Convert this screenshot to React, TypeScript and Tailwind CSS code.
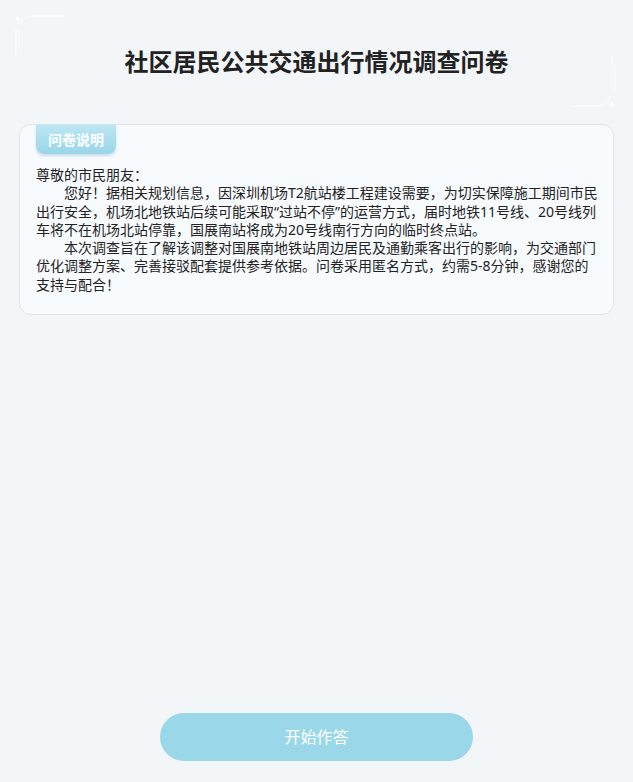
import React from "react";

const font = { fontFamily: '"Noto Sans", "Noto Sans CJK SC", sans-serif' };

function CornerDecor() {
  return (
    <>
      <svg className="absolute left-0 top-0 opacity-80" width="80" height="80" viewBox="0 0 80 80">
        <path d="M18 15.5 L19.3 17.7 L21.5 19 L19.3 20.3 L18 22.5 L16.7 20.3 L14.5 19 L16.7 17.7 Z" fill="#ffffff" />
        <path d="M29 16 H65" stroke="#ffffff" strokeWidth="1.2" fill="none" />
        <path d="M29 16 Q21 19 19 26" stroke="#ffffff" strokeWidth="1" fill="none" />
        <path d="M16 28 V62 M19 30 V50" stroke="#ffffff" strokeWidth="1" fill="none" />
      </svg>
      <svg className="absolute right-0 top-[50px] opacity-80" width="60" height="70" viewBox="0 0 60 70">
        <path d="M39 51.5 L40.3 53.7 L42.5 55 L40.3 56.3 L39 58.5 L37.7 56.3 L35.5 55 L37.7 53.7 Z" fill="#ffffff" />
        <path d="M39 5 V40 M42 15 V42" stroke="#ffffff" strokeWidth="1" fill="none" />
        <path d="M28 56 Q36 53 38 46" stroke="#ffffff" strokeWidth="1" fill="none" />
        <path d="M28 56 H0" stroke="#ffffff" strokeWidth="1.2" fill="none" />
      </svg>
    </>
  );
}

export default function App() {
  return (
    <div className="relative w-[633px] h-[782px] bg-[#f3f6f9] overflow-hidden flex flex-col" style={font}>
      <CornerDecor />

      {/* Title */}
      <h1 className="mt-[46px] text-center text-[24px] leading-[32px] font-bold text-[#222]">
        社区居民公共交通出行情况调查问卷
      </h1>

      {/* Intro card */}
      <div className="mx-[19px] mt-[46px] rounded-[12px] border border-[#dfe5ec] bg-[#f8fbfe] pl-4 pr-[11px] pb-[20px]">
        <div className="w-[80px] h-[29px] rounded-b-[8px] bg-gradient-to-b from-[#bde7f3] to-[#98d5e8] shadow-[0_2px_3px_rgba(120,170,190,0.35)] flex items-center justify-center text-white text-[14px] font-bold">
          问卷说明
        </div>
        <div className="mt-[12px] text-[14px] leading-[18.3px] text-[#222]">
          <p>尊敬的市民朋友：</p>
          <p className="indent-[2em]">
            您好！据相关规划信息，因深圳机场T2航站楼工程建设需要，为切实保障施工期间市民出行安全，机场北地铁站后续可能采取“过站不停”的运营方式，届时地铁11号线、20号线列车将不在机场北站停靠，国展南站将成为20号线南行方向的临时终点站。
          </p>
          <p className="indent-[2em]">
            本次调查旨在了解该调整对国展南地铁站周边居民及通勤乘客出行的影响，为交通部门优化调整方案、完善接驳配套提供参考依据。问卷采用匿名方式，约需5-8分钟，感谢您的支持与配合！
          </p>
        </div>
      </div>

      <div className="flex-1" />

      {/* Start button */}
      <div className="flex justify-center pb-[21px]">
        <button className="w-[313px] h-[48px] rounded-full bg-[#9ad8e9] text-white text-[16px]">
          开始作答
        </button>
      </div>
    </div>
  );
}
